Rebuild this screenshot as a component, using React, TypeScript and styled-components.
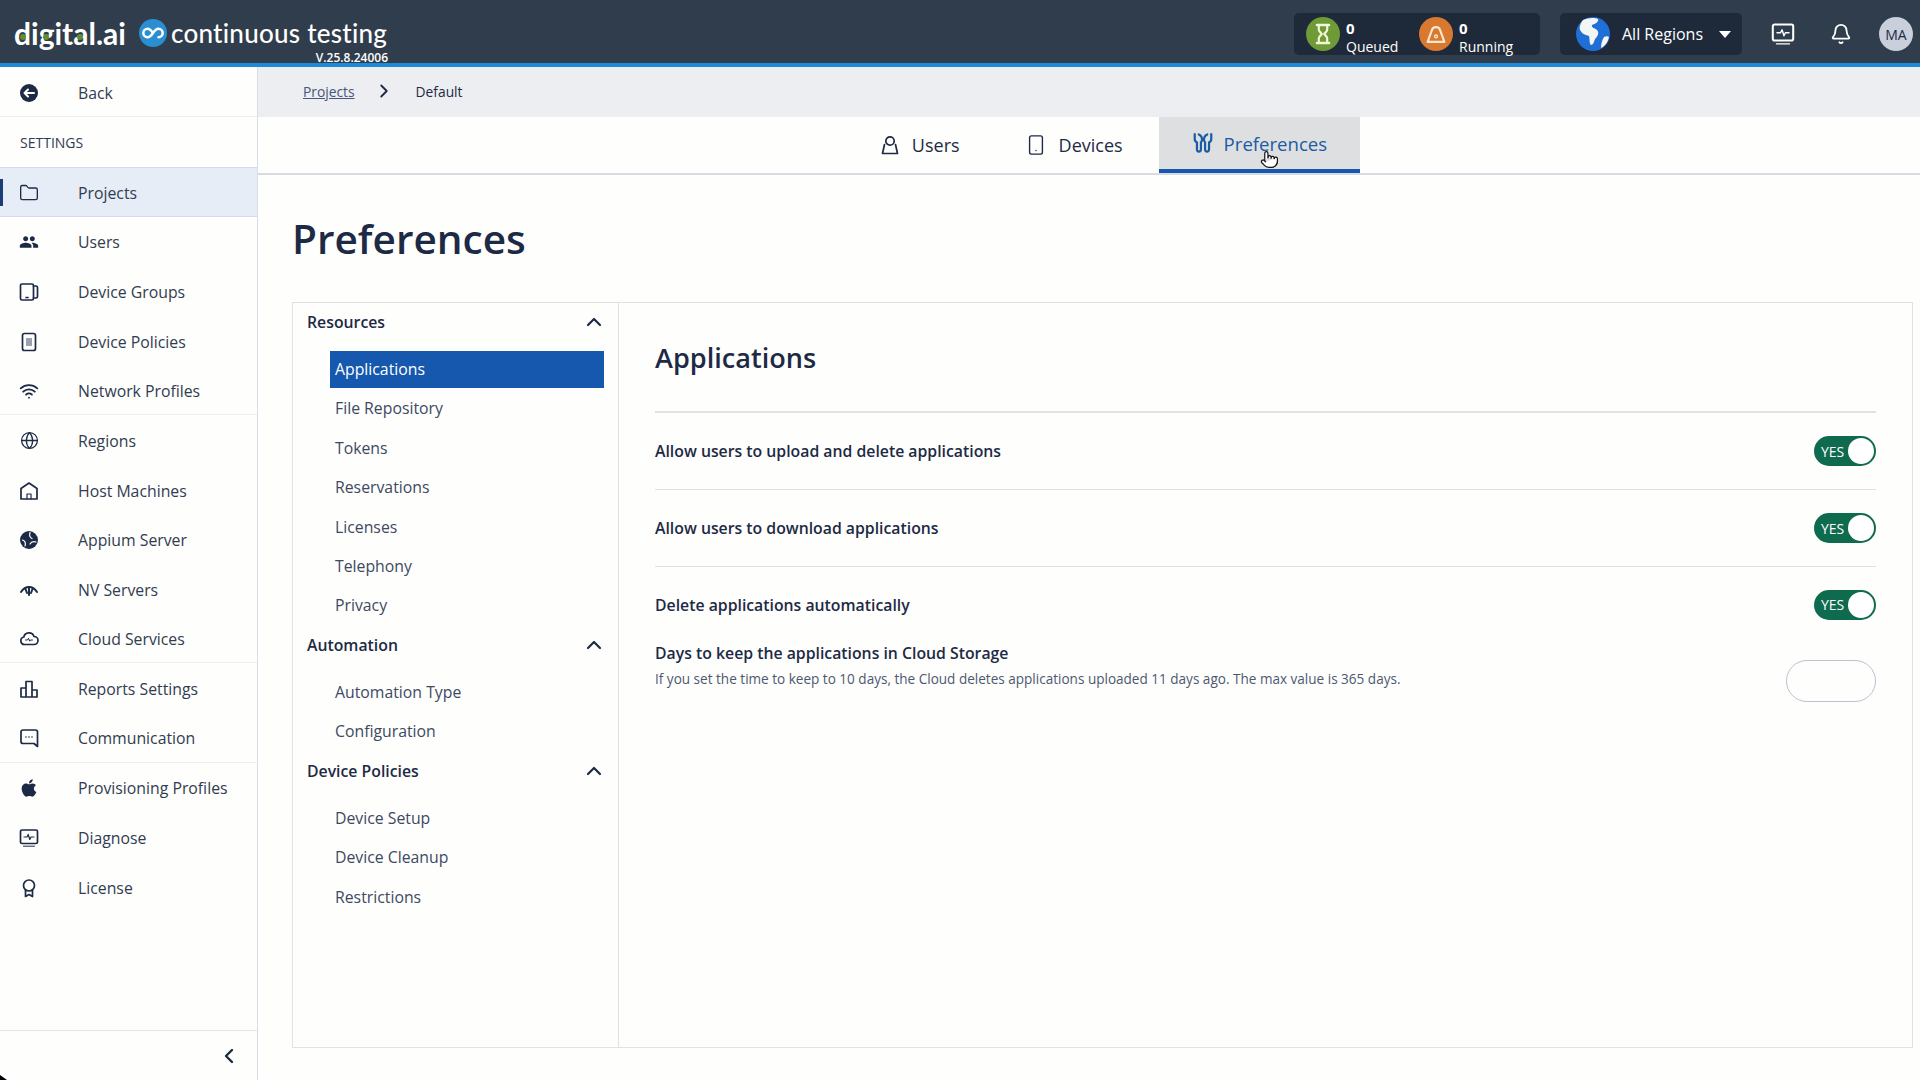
import React from 'react'
import styled, { createGlobalStyle } from 'styled-components'
import { Bell, ChevronLeft, ChevronRight, ChevronUp, Folder, Globe, Pointer, Smartphone, Wifi } from 'lucide-react'
import { FaApple } from 'react-icons/fa'
import { MdPeople } from 'react-icons/md'

const colors = {
  navy: '#1d2a45',
  text: '#313c52',
  subnav: '#3d4963',
  line: '#dfe2e7',
  blue: '#1558ad',
  green: '#0f6b4e',
  page: '#fefefc',
}

const GlobalStyle = createGlobalStyle`
  html, body { margin: 0; padding: 0; background: ${colors.page}; }
  * { box-sizing: border-box; }
  body { font-family: "Open Sans", "Liberation Sans", sans-serif; color: ${colors.navy}; }
`

const Page = styled.div`
  width: 1920px;
  height: 1080px;
  display: flex;
  flex-direction: column;
  overflow: hidden;
  position: relative;
`

const Corner = styled.div`
  position: absolute;
  left: 0;
  bottom: 0;
  width: 7px;
  height: 5px;
  background: #000;
  clip-path: polygon(0 0, 100% 100%, 0 100%);
`

/* header */
const Header = styled.header`
  height: 67px;
  flex: none;
  background: #2f3d4c;
  border-bottom: 4px solid #1f8ad8;
  display: flex;
  align-items: flex-start;
  padding: 13px 7px 0 14px;
  color: #fff;
`

const LogoBlock = styled.div`
  display: flex;
  flex-direction: column;
  width: 374px;
`

const LogoRow = styled.div`
  display: flex;
  align-items: center;
  height: 40px;
`

const Brand = styled.span`
  position: relative;
  font-family: Lato, "Open Sans", sans-serif;
  font-size: 30px;
  font-weight: 700;
  width: 125px;
  line-height: 40px;
`

const BrandDot = styled.i<{ $x: number }>`
  position: absolute;
  left: ${p => p.$x}px;
  top: 21px;
  width: 6px;
  height: 6px;
  border-radius: 50%;
  background: #5f8f2f;
`

const ProductBadge = styled.span`
  width: 28px;
  height: 28px;
  border-radius: 50%;
  background: #2a8fd2;
  display: flex;
  align-items: center;
  justify-content: center;
  margin-right: 4px;
`

const Product = styled.span`
  font-family: Lato, "Open Sans", sans-serif;
  font-size: 26px;
  font-weight: 500;
  line-height: 40px;
  letter-spacing: 0.25px;
  white-space: nowrap;
`

const Version = styled.span`
  align-self: flex-end;
  font-size: 12px;
  font-weight: 600;
  line-height: 16px;
  margin-top: -3px;
`

const HeaderRight = styled.div`
  margin-left: auto;
  display: flex;
  align-items: center;
  height: 42px;
`

const DarkBox = styled.div`
  height: 42px;
  background: #1e2a3a;
  border-radius: 5px;
  display: flex;
  align-items: center;
`

const QueueBox = styled(DarkBox)`
  width: 246px;
  padding-left: 12px;
  margin-right: 20px;
`

const RegionBox = styled(DarkBox)`
  width: 182px;
  padding-left: 16px;
  margin-right: 29px;
`

const Stat = styled.div`
  display: flex;
  align-items: center;
  width: 113px;
  gap: 6px;
`

const StatIcon = styled.span<{ $bg: string }>`
  width: 34px;
  height: 34px;
  border-radius: 50%;
  background: ${p => p.$bg};
  display: flex;
  align-items: center;
  justify-content: center;
  flex: none;
`

const StatText = styled.div`
  display: flex;
  flex-direction: column;
  padding-top: 7px;
  font-size: 14px;
  line-height: 20px;
`

const StatCount = styled.b`
  font-weight: 700;
  font-size: 15px;
  line-height: 18px;
`

const RegionLabel = styled.span`
  font-size: 16px;
  margin-left: 12px;
  white-space: nowrap;
`

const Caret = styled.span`
  margin-left: 16px;
  border-left: 6px solid transparent;
  border-right: 6px solid transparent;
  border-top: 7px solid #fff;
`

const HeaderIcon = styled.span<{ $gap: number }>`
  display: flex;
  margin-right: ${p => p.$gap}px;
`

const Avatar = styled.span`
  width: 34px;
  height: 34px;
  border-radius: 50%;
  background: #c9d0db;
  color: ${colors.navy};
  font-size: 14px;
  display: flex;
  align-items: center;
  justify-content: center;
`

/* sidebar */
const Body = styled.div`
  flex: 1;
  display: flex;
  min-height: 0;
`

const Sidebar = styled.aside`
  width: 258px;
  flex: none;
  border-right: 1px solid #d9dde6;
  display: flex;
  flex-direction: column;
`

const SideRow = styled.div<{ $active?: boolean; $divider?: boolean }>`
  position: relative;
  height: 49.64px;
  flex: none;
  display: flex;
  align-items: center;
  padding: 2px 0 0 19px;
  gap: 39px;
  font-size: 15.8px;
  color: ${colors.text};
  background: ${p => (p.$active ? '#e6edf7' : 'transparent')};
  border-top: ${p => (p.$active ? '1px solid #d3dbea' : 'none')};
  border-bottom: ${p => (p.$active ? '1px solid #d3dbea' : p.$divider ? '1px solid #eceef1' : 'none')};
`

const BackRow = styled(SideRow)`
  height: 50px;
  border-bottom: 1px solid #eceef1;
`

const ActiveMark = styled.span`
  position: absolute;
  left: 0;
  top: 11px;
  width: 3px;
  height: 27px;
  background: #1d3d78;
`

const SideIcon = styled.span`
  width: 20px;
  height: 20px;
  display: flex;
  align-items: center;
  justify-content: center;
  color: ${colors.navy};
  flex: none;
`

const SideTitle = styled.div`
  height: 50px;
  flex: none;
  display: flex;
  align-items: center;
  padding-left: 20px;
  font-size: 14px;
  color: ${colors.text};
`

const SideFooter = styled.div`
  margin-top: auto;
  height: 50px;
  flex: none;
  border-top: 1px solid #e3e5ea;
  display: flex;
  align-items: center;
  justify-content: flex-end;
  padding-right: 16px;
  color: ${colors.navy};
`

/* main */
const Main = styled.main`
  flex: 1;
  min-width: 0;
  display: flex;
  flex-direction: column;
`

const Breadcrumb = styled.nav`
  height: 50px;
  flex: none;
  background: #eceef1;
  display: flex;
  align-items: center;
  padding: 0 0 1px 45px;
  font-size: 13.8px;
  color: ${colors.navy};
`

const CrumbLink = styled.a`
  color: #47567a;
  text-decoration: underline;
`

const CrumbSep = styled.span`
  display: flex;
  margin: -2px 21px 0 18px;
`

const CrumbCurrent = styled.span`
  font-weight: 500;
`

const TabBar = styled.div`
  height: 58px;
  flex: none;
  border-bottom: 2px solid #d8dbe1;
  display: flex;
  justify-content: center;
  padding-left: 31px;
  gap: 3px;
`

const Tab = styled.div<{ $active?: boolean }>`
  position: relative;
  height: 56px;
  padding: 0 ${p => (p.$active ? 33 : 31)}px;
  margin-left: ${p => (p.$active ? 2 : 0)}px;
  display: flex;
  align-items: center;
  gap: ${p => (p.$active ? 10 : 12)}px;
  font-size: ${p => (p.$active ? 18.6 : 18)}px;
  font-weight: ${p => (p.$active ? 500 : 400)};
  color: ${p => (p.$active ? '#1a5ba6' : colors.navy)};
  background: ${p => (p.$active ? '#dedfe0' : 'transparent')};
  border-bottom: ${p => (p.$active ? `4px solid ${colors.blue}` : 'none')};
`

const Cursor = styled.span`
  position: absolute;
  left: 101px;
  top: 33px;
  display: flex;
  color: #111;
`

const Content = styled.div`
  flex: 1;
  min-height: 0;
  display: flex;
  flex-direction: column;
  padding: 0 7px 32px 34px;
`

const Title = styled.h1`
  margin: 0;
  height: 127px;
  flex: none;
  display: flex;
  align-items: center;
  padding-bottom: 1px;
  font-size: 40.6px;
  font-weight: 600;
  color: ${colors.navy};
`

const Panel = styled.section`
  flex: 1;
  min-height: 0;
  border: 1px solid ${colors.line};
  display: flex;
`

const PanelNav = styled.div`
  width: 326px;
  flex: none;
  border-right: 1px solid ${colors.line};
  padding-right: 12px;
`

const NavHead = styled.div`
  height: 40px;
  display: flex;
  align-items: center;
  justify-content: space-between;
  padding: 0 0 2px 14px;
  font-size: 15.8px;
  font-weight: 600;
  color: ${colors.navy};
`

const NavList = styled.div`
  margin: 7.5px 2px 2.1px 37px;
  display: flex;
  flex-direction: column;
  gap: 2.4px;
`

const NavItem = styled.div<{ $active?: boolean }>`
  height: 37px;
  display: flex;
  align-items: center;
  padding-left: 5px;
  font-size: 15.8px;
  font-weight: ${p => (p.$active ? 500 : 400)};
  color: ${p => (p.$active ? '#fff' : colors.subnav)};
  background: ${p => (p.$active ? colors.blue : 'transparent')};
`

const Pane = styled.div`
  flex: 1;
  min-width: 0;
  padding: 0 36px;
`

const PaneTitle = styled.h2`
  margin: 0;
  height: 110px;
  border-bottom: 2px solid ${colors.line};
  display: flex;
  align-items: center;
  font-size: 27.1px;
  font-weight: 600;
  color: ${colors.navy};
`

const SettingRow = styled.div<{ $last?: boolean }>`
  height: ${p => (p.$last ? 75 : 77)}px;
  display: flex;
  align-items: center;
  justify-content: space-between;
  border-bottom: ${p => (p.$last ? 'none' : `1px solid ${colors.line}`)};
  font-size: 15.8px;
  font-weight: 600;
  color: ${colors.navy};
`

const Toggle = styled.span`
  width: 62px;
  height: 30px;
  border-radius: 15px;
  background: ${colors.green};
  display: flex;
  align-items: center;
  justify-content: space-between;
  padding: 0 2px 0 7px;
  color: #fff;
  font-size: 14px;
  font-weight: 400;
`

const Knob = styled.span`
  width: 26px;
  height: 26px;
  border-radius: 50%;
  background: #fff;
`

const DaysRow = styled.div`
  display: flex;
  justify-content: space-between;
  align-items: flex-start;
`

const DaysLabel = styled.div`
  font-size: 15.8px;
  font-weight: 600;
  line-height: 22px;
  color: ${colors.navy};
`

const DaysHint = styled.div`
  font-size: 13.55px;
  line-height: 22px;
  margin-top: 4px;
  color: #4d5870;
`

const DaysInput = styled.span`
  width: 90px;
  height: 42px;
  margin-top: 18px;
  border: 1px solid #bcc3d0;
  border-radius: 21px;
`

/* drawn icons */
const Svg: React.FC<{ size?: number; color?: string; children: React.ReactNode }> = ({ size = 20, color = 'currentColor', children }) => (
  <svg width={size} height={size} viewBox="0 0 20 20" fill="none" stroke={color} strokeWidth="1.7" strokeLinecap="round" strokeLinejoin="round">
    {children}
  </svg>
)

const BackIcon = () => (
  <Svg>
    <circle cx="10" cy="10" r="9" fill="currentColor" stroke="none" />
    <path d="M15 10H6M9 6.5 5.5 10 9 13.5" stroke="#fff" strokeWidth="2" />
  </Svg>
)
const DeviceGroupsIcon = () => (
  <Svg>
    <rect x="1.5" y="2" width="13" height="16" rx="1.5" />
    <path d="M14.5 4h2.5a1.5 1.5 0 0 1 1.5 1.5v9a1.5 1.5 0 0 1-1.5 1.5h-2.5M7 15.5h2" />
  </Svg>
)
const DevicePolicyIcon = () => (
  <Svg>
    <rect x="3.5" y="1.5" width="13" height="17" rx="2" />
    <rect x="7" y="6" width="6" height="8" fill="#9aa2b1" stroke="none" />
  </Svg>
)
const HostIcon = () => (
  <Svg>
    <path d="M2 18V7.5L10 2l8 5.5V18Z" />
    <path d="M8 18v-5h4v5" strokeWidth="1.2" />
  </Svg>
)
const AppiumIcon = () => (
  <Svg>
    <circle cx="10" cy="10" r="9" fill="currentColor" stroke="none" />
    <path d="M11 2.5c-1 3 0 5 2 6M17 12c-3-1-5 0-6 2M6 16c1-3 0-5-2.500-6" stroke="#fff" strokeWidth="1.2" />
  </Svg>
)
const NvIcon = () => (
  <Svg>
    <path d="M2 12C4 9 7 7 10 7s6 2 8 5" strokeWidth="2" />
    <path d="M10 7v8M6.500 9 8 13M13.500 9 12 13" strokeWidth="2" />
  </Svg>
)
const CloudIcon = () => (
  <Svg>
    <path d="M5.500 15.500A3.800 3.800 0 0 1 4.800 8a5.300 5.300 0 0 1 10.200-.5 4 4 0 0 1 0 8Z" />
    <path d="M6.500 11h2l1-1.800 1.200 3 .8-1.200h2" strokeWidth="1" />
  </Svg>
)
const ReportsIcon = () => (
  <Svg>
    <path d="M2 18v-9h5V2.500h6V11h5v7ZM7 9v9M13 11v7" />
  </Svg>
)
const ChatIcon = () => (
  <Svg>
    <path d="M18.500 18.500 15 15.500H4a2 2 0 0 1-2-2V4a2 2 0 0 1 2-2h12.500a2 2 0 0 1 2 2Z" />
    <path d="M7 9h.01M10 9h.01M13 9h.01" strokeWidth="1.600" />
  </Svg>
)
const MonitorIcon: React.FC<{ size?: number }> = ({ size = 20 }) => (
  <Svg size={size}>
    <rect x="1.500" y="2" width="17" height="13.500" rx="1.500" />
    <path d="M4.500 18.200h11" strokeWidth="1" />
    <path d="M5 9h3l1.200-2.500 1.600 5L12 9h3" strokeWidth="1.200" />
  </Svg>
)
const LicenseIcon = () => (
  <Svg>
    <circle cx="10" cy="7.500" r="5.500" />
    <path d="M6.500 12v6.500l3.500-2 3.500 2V12" />
  </Svg>
)
const UserTabIcon = () => (
  <Svg>
    <circle cx="10" cy="6" r="4.200" />
    <path d="M4.500 9.500 2.500 18.500h15l-2-9" />
  </Svg>
)
const PrefsIcon = () => (
  <Svg size={22}>
    <path d="M2.500 2v4.500a3 3 0 0 0 2 2.800V16a1.800 1.800 0 0 0 3.600 0V9.300a3 3 0 0 0 1-2.300 5 5 0 0 0-3-4.800" strokeWidth="2" />
    <path d="M17.500 2v4.500a3 3 0 0 1-2 2.800V16a1.800 1.800 0 0 1-3.600 0V9.300a3 3 0 0 1-1-2.300 5 5 0 0 1 3-4.800" strokeWidth="2" />
  </Svg>
)
const HourglassIcon = () => (
  <Svg size={24} color="#f1f6d8">
    <path d="M5 2.500h10M5 17.500h10" strokeWidth="2.200" />
    <path d="M6.500 3v3.500c0 1.500 2 2.500 2.500 3.500-.5 1-2.500 2-2.500 3.500V17M13.500 3v3.500c0 1.500-2 2.500-2.500 3.500.5 1 2.500 2 2.500 3.500V17" strokeWidth="1.800" />
  </Svg>
)
const AlertBellIcon = () => (
  <Svg size={24} color="#fbe6cf">
    <path d="M3 16.500 6.500 7a3.600 3.600 0 0 1 7 0l3.500 9.500Z" strokeWidth="1.800" />
    <circle cx="10" cy="12" r="1.200" strokeWidth="1.200" />
  </Svg>
)
const InfinityIcon = () => (
  <svg width="22" height="12" viewBox="0 0 22 12" fill="none" stroke="#fff" strokeWidth="2.500" strokeLinecap="round">
    <path d="M11 6C9 3 7.500 1.800 5.500 1.800a4.200 4.200 0 0 0 0 8.400c2 0 3.500-1.200 5.500-4.200s3.500-4.200 5.500-4.200a4.200 4.200 0 0 1 0 8.400" />
  </svg>
)
const EarthIcon = () => (
  <svg width="34" height="34" viewBox="0 0 34 34">
    <circle cx="17" cy="17" r="17" fill="#1f6fd6" />
    <path d="M7 3c4-2 11-3 15-1 1 3-3 5-6 6-1 3 3 3 5 5 3 3 0 7-2 9-1 3-2 6-4 6-2-2-1-6-2-9-3-1-7-2-9-6C3 10 5 5 7 3Z" fill="#f3f6f2" />
    <path d="M28 20c2-1 4-1 5 0-1 5-4 9-8 11 0-4 1-8 3-11Z" fill="#f3f6f2" />
  </svg>
)

type SideItem = { label: string; icon: React.ReactNode; active?: boolean; divider?: boolean }

const sideItems: SideItem[] = [
  { label: 'Projects', icon: <Folder size={20} strokeWidth={1.6} />, active: true },
  { label: 'Users', icon: <MdPeople size={24} /> },
  { label: 'Device Groups', icon: <DeviceGroupsIcon /> },
  { label: 'Device Policies', icon: <DevicePolicyIcon /> },
  { label: 'Network Profiles', icon: <Wifi size={20} strokeWidth={2.2} />, divider: true },
  { label: 'Regions', icon: <Globe size={19} strokeWidth={1.6} /> },
  { label: 'Host Machines', icon: <HostIcon /> },
  { label: 'Appium Server', icon: <AppiumIcon /> },
  { label: 'NV Servers', icon: <NvIcon /> },
  { label: 'Cloud Services', icon: <CloudIcon />, divider: true },
  { label: 'Reports Settings', icon: <ReportsIcon /> },
  { label: 'Communication', icon: <ChatIcon />, divider: true },
  { label: 'Provisioning Profiles', icon: <FaApple size={20} /> },
  { label: 'Diagnose', icon: <MonitorIcon /> },
  { label: 'License', icon: <LicenseIcon /> },
]

const navSections = [
  { title: 'Resources', items: ['Applications', 'File Repository', 'Tokens', 'Reservations', 'Licenses', 'Telephony', 'Privacy'] },
  { title: 'Automation', items: ['Automation Type', 'Configuration'] },
  { title: 'Device Policies', items: ['Device Setup', 'Device Cleanup', 'Restrictions'] },
]

const settings = ['Allow users to upload and delete applications', 'Allow users to download applications', 'Delete applications automatically']

function App() {
  return (
    <Page>
      <GlobalStyle />
      <Header>
        <LogoBlock>
          <LogoRow>
            <Brand>
              digital.ai
              <BrandDot $x={6} />
              <BrandDot $x={29} />
              <BrandDot $x={63} />
            </Brand>
            <ProductBadge>
              <InfinityIcon />
            </ProductBadge>
            <Product>continuous testing</Product>
          </LogoRow>
          <Version>V.25.8.24006</Version>
        </LogoBlock>
        <HeaderRight>
          <QueueBox>
            <Stat>
              <StatIcon $bg="#6f9a35">
                <HourglassIcon />
              </StatIcon>
              <StatText>
                <StatCount>0</StatCount>
                Queued
              </StatText>
            </Stat>
            <Stat>
              <StatIcon $bg="#d9782f">
                <AlertBellIcon />
              </StatIcon>
              <StatText>
                <StatCount>0</StatCount>
                Running
              </StatText>
            </Stat>
          </QueueBox>
          <RegionBox>
            <EarthIcon />
            <RegionLabel>All Regions</RegionLabel>
            <Caret />
          </RegionBox>
          <HeaderIcon $gap={35}>
            <MonitorIcon size={24} />
          </HeaderIcon>
          <HeaderIcon $gap={27}>
            <Bell size={22} strokeWidth={2} />
          </HeaderIcon>
          <Avatar>MA</Avatar>
        </HeaderRight>
      </Header>
      <Body>
        <Sidebar>
          <BackRow>
            <SideIcon>
              <BackIcon />
            </SideIcon>
            Back
          </BackRow>
          <SideTitle>SETTINGS</SideTitle>
          {sideItems.map(item => (
            <SideRow key={item.label} $active={item.active} $divider={item.divider}>
              {item.active && <ActiveMark />}
              <SideIcon>{item.icon}</SideIcon>
              {item.label}
            </SideRow>
          ))}
          <SideFooter>
            <ChevronLeft size={24} strokeWidth={2.4} />
          </SideFooter>
        </Sidebar>
        <Main>
          <Breadcrumb>
            <CrumbLink>Projects</CrumbLink>
            <CrumbSep>
              <ChevronRight size={22} strokeWidth={2} />
            </CrumbSep>
            <CrumbCurrent>Default</CrumbCurrent>
          </Breadcrumb>
          <TabBar>
            <Tab>
              <UserTabIcon />
              Users
            </Tab>
            <Tab>
              <Smartphone size={22} strokeWidth={1.5} />
              Devices
            </Tab>
            <Tab $active>
              <PrefsIcon />
              Preferences
              <Cursor>
                <Pointer size={19} fill="#fff" strokeWidth={1.5} />
              </Cursor>
            </Tab>
          </TabBar>
          <Content>
            <Title>Preferences</Title>
            <Panel>
              <PanelNav>
                {navSections.map(section => (
                  <div key={section.title}>
                    <NavHead>
                      {section.title}
                      <ChevronUp size={24} strokeWidth={2.2} />
                    </NavHead>
                    <NavList>
                      {section.items.map(item => (
                        <NavItem key={item} $active={item === 'Applications'}>
                          {item}
                        </NavItem>
                      ))}
                    </NavList>
                  </div>
                ))}
              </PanelNav>
              <Pane>
                <PaneTitle>Applications</PaneTitle>
                {settings.map((label, i) => (
                  <SettingRow key={label} $last={i === settings.length - 1}>
                    {label}
                    <Toggle>
                      YES
                      <Knob />
                    </Toggle>
                  </SettingRow>
                ))}
                <DaysRow>
                  <div>
                    <DaysLabel>Days to keep the applications in Cloud Storage</DaysLabel>
                    <DaysHint>If you set the time to keep to 10 days, the Cloud deletes applications uploaded 11 days ago. The max value is 365 days.</DaysHint>
                  </div>
                  <DaysInput />
                </DaysRow>
              </Pane>
            </Panel>
          </Content>
        </Main>
      </Body>
      <Corner />
    </Page>
  )
}

export default App
